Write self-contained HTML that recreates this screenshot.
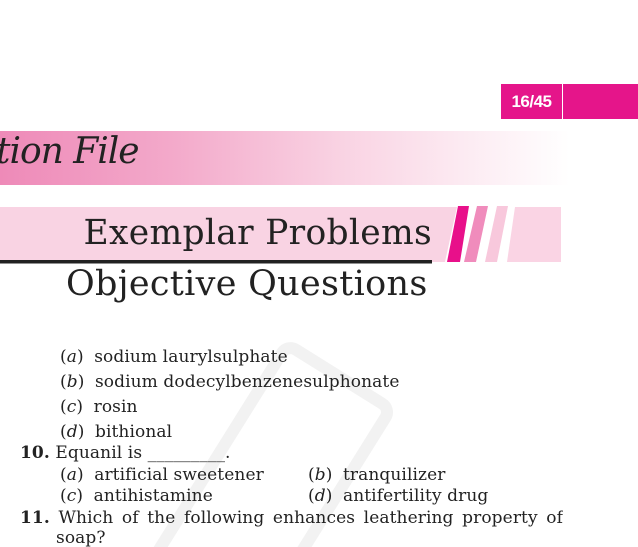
<!DOCTYPE html>
<html><head><meta charset="utf-8"><style>
html,body{margin:0;padding:0;width:638px;height:547px;overflow:hidden;background:#fff;position:relative;font-family:"DejaVu Serif",serif;color:#222}
.a{position:absolute}
.t{position:absolute;font-size:17px;white-space:nowrap;line-height:18px;font-family:"DejaVu Serif",serif;letter-spacing:0.1px}
.t s{text-decoration:none;display:inline-block;width:5px}
i{font-style:italic}
</style></head><body>
<div class="a" style="left:501px;top:84px;width:137px;height:35px;background:#e5158a"></div>
<div class="a" style="left:562px;top:84px;width:1px;height:35px;background:#fff"></div>
<div class="a" style="left:501px;top:84px;width:61px;height:35px;color:#fff;font:bold 17px 'Liberation Sans',sans-serif;line-height:35px;text-align:center;letter-spacing:-0.5px">16/45</div>
<div class="a" style="left:0;top:131px;width:570px;height:54px;background:linear-gradient(90deg,#ee8ab8 0%,#f3a9ca 30%,#f9d3e3 60%,#fff 100%)"></div>
<div class="a" style="left:-4px;top:131px;height:54px;line-height:54px;font:italic 36px 'DejaVu Serif',serif;color:#222;letter-spacing:-1px">tion File</div>
<div class="a" style="left:0;top:300px;width:638px;height:247px;overflow:hidden">
<div class="a" style="left:200px;top:50px;width:110px;height:260px;border:12px solid rgba(0,0,0,0.05);border-radius:16px;transform:rotate(32deg)"></div>
</div>
<svg class="a" style="left:0;top:200px" width="638" height="70">
<polygon points="0,7 457,7 445,62 0,62" fill="#f9d3e3"/>
<rect x="0" y="60" width="432" height="3.5" fill="#222"/>
<polygon points="458,6 469,6 460,62 447,62" fill="#e8108a"/>
<polygon points="477,6 488,6 476,62 464,62" fill="#f08cbc"/>
<polygon points="497,6 508,6 497,62 485,62" fill="#f8c8dc"/>
<polygon points="515,7 561,7 561,62 507,62" fill="#fad4e4"/>
</svg>
<div class="a" style="left:0;width:432px;top:211px;text-align:right;font-size:34.5px;line-height:44px;color:#222;font-family:'DejaVu Serif',serif;letter-spacing:0.3px">Exemplar Problems</div>
<div class="a" style="left:66px;top:262px;font-size:35px;line-height:44px;color:#222;font-family:'DejaVu Serif',serif;letter-spacing:0.3px">Objective Questions</div>
<div class="t" style="left:60px;top:348px">(<i>a</i>)<s></s> sodium laurylsulphate</div>
<div class="t" style="left:60px;top:373px">(<i>b</i>)<s></s> sodium dodecylbenzenesulphonate</div>
<div class="t" style="left:60px;top:398px">(<i>c</i>)<s></s> rosin</div>
<div class="t" style="left:60px;top:423px">(<i>d</i>)<s></s> bithional</div>
<div class="t" style="left:20px;top:444px"><b>10.</b> Equanil is _________.</div>
<div class="t" style="left:60px;top:466px">(<i>a</i>)<s></s> artificial sweetener</div>
<div class="t" style="left:308px;top:466px">(<i>b</i>)<s></s> tranquilizer</div>
<div class="t" style="left:60px;top:487px">(<i>c</i>)<s></s> antihistamine</div>
<div class="t" style="left:308px;top:487px">(<i>d</i>)<s></s> antifertility drug</div>
<div class="t" style="left:20px;top:509px;width:543px;white-space:normal;height:18px;overflow:hidden;text-align:justify;text-align-last:justify"><b>11.</b> Which of the following enhances leathering property of</div>
<div class="t" style="left:56px;top:529px;height:18px;overflow:hidden">soap?</div>
</body></html>
